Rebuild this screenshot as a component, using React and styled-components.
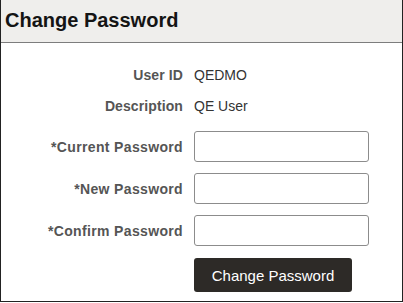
import React from "react";
import styled, { createGlobalStyle } from "styled-components";

const Global = createGlobalStyle`
  html, body { margin: 0; padding: 0; background: #fff; }
  body { font-family: Arial, "Liberation Sans", sans-serif; }
  * { box-sizing: border-box; }
`;

const Panel = styled.div`
  width: 403px;
  height: 302px;
  border: 1px solid #222;
  border-top: none;
  background: #fff;
  display: flex;
  flex-direction: column;
`;

const Header = styled.div`
  height: 43px;
  flex: none;
  background: #efeeec;
  border-bottom: 1px solid #7d7d7d;
  display: flex;
  align-items: center;
  padding: 0 0 1px 4px;
`;

const Title = styled.h1`
  margin: 0;
  font-size: 20px;
  font-weight: bold;
  color: #141414;
  font-family: Arial, "Liberation Sans", sans-serif;
`;

const Form = styled.div`
  display: flex;
  flex-direction: column;
  padding-top: 16px;
`;

const InfoGroup = styled.div`
  display: flex;
  flex-direction: column;
`;

const FieldGroup = styled.div`
  display: flex;
  flex-direction: column;
  gap: 11px;
  margin-top: 10px;
`;

const Row = styled.div`
  display: grid;
  grid-template-columns: 182px 1fr;
  column-gap: 11px;
  align-items: center;
  height: ${(p) => p.$h}px;
`;

const Label = styled.label`
  text-align: right;
  font-size: 14px;
  font-weight: bold;
  color: #555;
  letter-spacing: ${(p) => (p.$wide ? "0.35px" : "0.1px")};
`;

const Value = styled.span`
  font-size: 14px;
  color: #333;
`;

const Input = styled.input`
  width: 175px;
  height: 31px;
  border: 1px solid #8c8c8c;
  border-radius: 3px;
  background: #fff;
  padding: 0 6px;
  font-size: 14px;
`;

const ButtonRow = styled.div`
  display: grid;
  grid-template-columns: 182px 1fr;
  column-gap: 11px;
  margin-top: 12px;
`;

const Button = styled.button`
  grid-column: 2;
  width: 158px;
  height: 34px;
  border: none;
  border-radius: 3px;
  background: #2d2a27;
  color: #fff;
  font-family: Arial, "Liberation Sans", sans-serif;
  font-size: 15px;
  padding: 0;
`;

export default function App() {
  return (
    <>
      <Global />
      <Panel>
        <Header>
          <Title>Change Password</Title>
        </Header>
        <Form>
          <InfoGroup>
            <Row $h={31}>
              <Label>User ID</Label>
              <Value>QEDMO</Value>
            </Row>
            <Row $h={31}>
              <Label>Description</Label>
              <Value>QE User</Value>
            </Row>
          </InfoGroup>
          <FieldGroup>
            <Row $h={31}>
              <Label $wide>*Current Password</Label>
              <Input type="password" />
            </Row>
            <Row $h={31}>
              <Label $wide>*New Password</Label>
              <Input type="password" />
            </Row>
            <Row $h={31}>
              <Label $wide>*Confirm Password</Label>
              <Input type="password" />
            </Row>
          </FieldGroup>
          <ButtonRow>
            <Button>Change Password</Button>
          </ButtonRow>
        </Form>
      </Panel>
    </>
  );
}
